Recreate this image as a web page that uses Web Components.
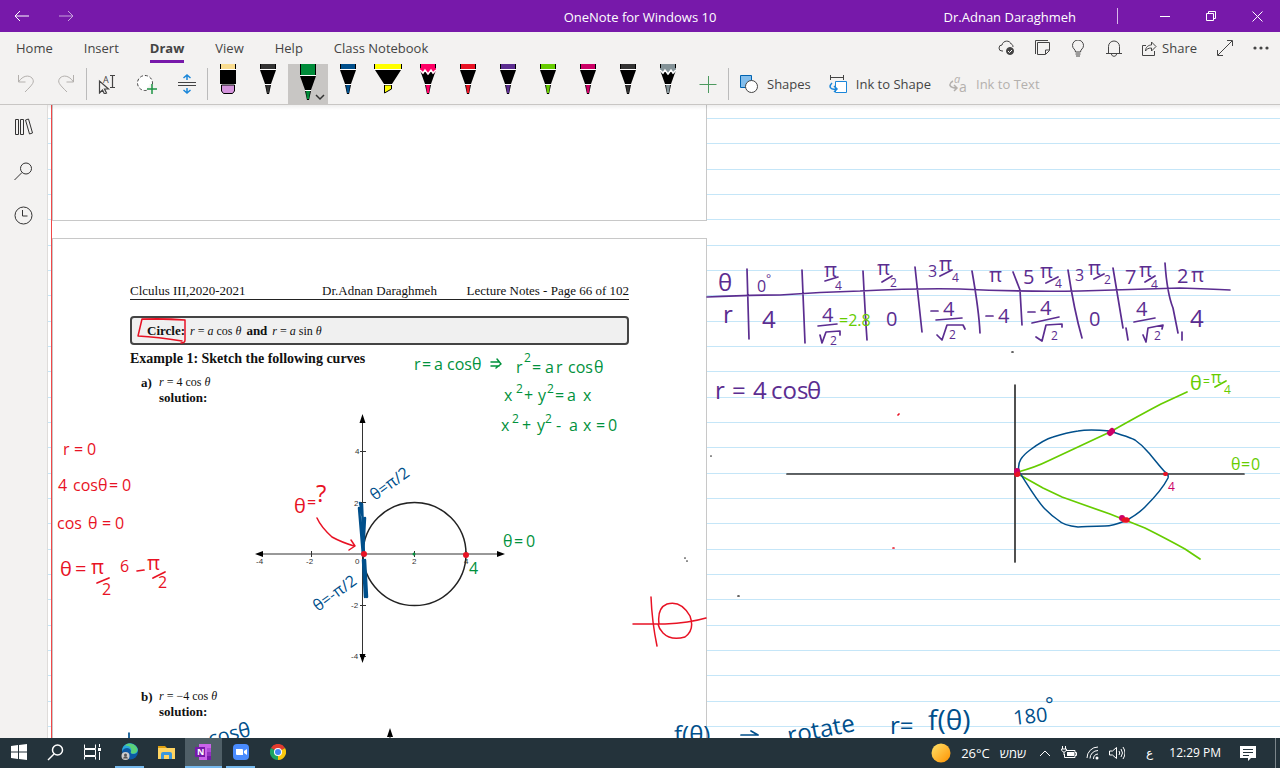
<!DOCTYPE html>
<html lang="en">
<head>
<meta charset="utf-8">
<title>OneNote for Windows 10</title>
<style>
html,body{margin:0;height:100%}
body{font:13px/18px "Open Sans","Noto Sans",sans-serif;color:#444;background:#fff;overflow:hidden}
</style>
</head>
<body>
<note-app></note-app>
<script>
function define(name, html, setup) {
  const t = document.createElement('template');
  t.innerHTML = html;
  customElements.define(name, class extends HTMLElement {
    constructor() {
      super();
      this.attachShadow({mode: 'open'}).append(t.content.cloneNode(true));
    }
    connectedCallback() { if (setup) setup(this, this.shadowRoot); }
  });
}
const base = `*,:host{box-sizing:border-box}button{font:inherit;color:inherit;background:none;border:0;padding:0;margin:0}
svg{display:block;fill:none;stroke:currentColor}`;

/* ---------- title bar ---------- */
define('title-bar', `<style>${base}
:host{display:grid;grid-template-columns:1fr auto 1fr;align-items:center;height:32px;background:#7719aa;color:#fff;flex:none}
nav,.right{display:flex;align-items:center}
nav button{width:44px;height:32px;display:grid;place-items:center}
nav button+button{opacity:.6}
.right{justify-content:flex-end}
.right button{width:46px;height:32px;display:grid;place-items:center}
i{width:1px;height:16px;background:#d9b8ea;margin:0 24px 0 41px}
span{padding-top:2px}
</style>
<nav><button aria-label="Back"><svg width="16" height="12"><path d="M15 6H1M6 1 1 6l5 5"/></svg></button>
<button aria-label="Forward"><svg width="16" height="12"><path d="M1 6h14M10 1l5 5-5 5"/></svg></button></nav>
<span>OneNote for Windows 10</span>
<div class="right"><span>Dr.Adnan Daraghmeh</span><i></i>
<button aria-label="Minimize"><svg width="10" height="10"><path d="M0 5.500h10"/></svg></button>
<button aria-label="Restore"><svg width="11" height="11"><path d="M.5 2.500h7v7h-7zM2.500 2V.5h7v7H8"/></svg></button>
<button aria-label="Close"><svg width="11" height="11"><path d="m.5.5 10 10m0-10-10 10"/></svg></button></div>`);

/* ---------- tabs ---------- */
define('tab-strip', `<style>${base}
:host{display:flex;justify-content:space-between;height:32px;flex:none;padding:0 1px 0 16px}
nav{display:flex;gap:31px}
nav button{height:31px;padding-top:4px;border-bottom:3px solid transparent}
nav .on{font-weight:bold;border-color:#7719aa}
.tools{display:flex;align-items:center}
.tools button{width:36px;height:32px;display:grid;place-items:center}
.tools .share{width:auto;display:flex;align-items:center;gap:5px;padding:0 10px}
</style>
<nav><button>Home</button><button>Insert</button><button class="on">Draw</button><button>View</button><button>Help</button><button>Class Notebook</button></nav>
<div class="tools">
<button aria-label="Sync"><svg width="17" height="16"><path d="M5 11H4a3 3 0 0 1 0-6c1-5 8-5 9-1 1 0 2 1 2 3"/><circle cx="12" cy="11" r="3.500" fill="#444"/><path stroke="#fff" d="m10 11 1.500 1.500L14 10"/></svg></button>
<button aria-label="Notes"><svg width="16" height="16"><path d="M1.500 14V.500H14M3.500 2.500h12v8l-4 4h-8zM11.500 14v-4h4"/></svg></button>
<button aria-label="Ideas"><svg width="14" height="17"><path d="M4.500 12c0-3-3-3-3-6.500a5.500 5.500 0 0 1 11 0C12.500 9 9.500 9 9.500 12zM4.500 14h5M5 16h4"/></svg></button>
<button aria-label="Notifications"><svg width="16" height="17"><path d="M2.500 13.500V6.500a5 5 0 0 1 11 0v7M0 13.500h16M5.500 14c0 3 5 3 5 0"/></svg></button>
<button class="share"><svg width="15" height="16"><path d="M4 5.500H.5v10h12V11M3.500 11c0-4 3-6 6-6V2l4.500 4.500L9.500 11V8c-3 0-5 1-6 3z"/></svg>Share</button>
<button aria-label="Full screen"><svg width="16" height="16"><path d="M1 15 15 1M10 .5h5.500V6M.5 10v5.500H6"/></svg></button>
<button aria-label="More"><svg width="16" height="4"><g fill="#444" stroke="none"><circle cx="2" cy="2" r="1.600"/><circle cx="8" cy="2" r="1.600"/><circle cx="14" cy="2" r="1.600"/></g></svg></button>
</div>`);

/* ---------- a pen of the ribbon: kind = pen | pencil | marker | eraser ---------- */
define('pen-button', `<style>${base}
:host{display:block;width:40px;height:40px}
:host([selected]){background:#c8c6c4}
button{display:block;width:40px;height:40px}
</style><button><svg width="40" height="40" stroke="none"></svg></button>`, (el, root) => {
  const c = el.getAttribute('color'), kind = el.getAttribute('kind') || 'pen', sel = el.hasAttribute('selected');
  root.querySelector('button').setAttribute('aria-label', el.getAttribute('label'));
  const d = sel ? 6 : 0;
  let s = '';
  if (kind === 'marker') s = `<path fill="#000" d="M6 0h28v5H6zM7 6h26l-9 14h-8z"/><path fill="${c}" d="M7 0h26v5H7z"/><path fill="${c}" stroke="#000" d="M16.500 21h7v4l-7 4z"/><path fill="#fff" d="M6 5h28v1H6zM15 20h10v1H15z"/>`;
  else if (kind === 'eraser') s = `<path fill="#000" d="M12 0h16v5H12zM12 6h16v14H12z"/><path fill="${c}" d="M13 0h14v5H13z"/><path fill="#fff" d="M12 5h16v1H12zM12 20h16v1H12z"/><path fill="#d494dc" stroke="#000" d="M13.500 21h13v6l-2 2.500h-9l-2-2.500z"/>`;
  else {
    s = `<path fill="#000" d="M12 0h16v${5+d}H12z"/><path fill="${c}" d="M13 0h14v${5+d}H13z"/>
    <g transform="translate(0 ${d})"><path fill="#000" d="M12 6h16l-5 14h-6z"/><path fill="#fff" d="M12 5h16v1H12zM17 20h6v1h-6z"/>
    <path fill="#000" d="M17 21h6l-2 9h-2z"/><path fill="${c}" d="M18 21h4l-1 8h-2z"/>`;
    if (kind === 'pencil') s += `<path fill="${c}" d="M12 4h16v3l-3 3-2-3-3 4-3-4-2 3-3-3z"/><path fill="none" stroke="#fff" stroke-width="1.500" d="m12 6 3 3 2-3 3 4 3-4 2 3 3-3"/>`;
    s += '</g>';
    if (sel) s += '<path fill="none" stroke="#333" stroke-width="1.500" d="m28 31 4 4 4-4"/>';
  }
  const svg = root.querySelector('svg');
  svg.style.stroke = 'none';
  svg.innerHTML = s;
});

/* ---------- ribbon ---------- */
define('draw-ribbon', `<style>${base}
:host{display:flex;height:41px;flex:none;border-bottom:1px solid #c8c6c4}
button{height:40px;width:40px;display:grid;place-items:center}
i{width:1px;height:32px;margin-top:4px;background:#bbb}
.edit{display:flex;width:208px;padding-left:6px}
.w{width:auto;display:flex;align-items:center;gap:9px;padding:0 7px 0 11px}
.off{color:#b3b0ad}
svg text{stroke:none;fill:currentColor}
</style>
<div class="edit">
<button class="off" aria-label="Undo"><svg width="18" height="20"><path d="M1.500 1v7h7M1.500 8C6 1 12 1 15 4c3 4 1 6-7 14"/></svg></button>
<button class="off" aria-label="Redo"><svg width="18" height="20"><path d="M16.500 1v7h-7M16.500 8C12 1 6 1 3 4c-3 4-1 6 7 14"/></svg></button>
<i></i>
<button aria-label="Select text"><svg width="20" height="20"><path stroke-width="1.200" d="M2.500 7v12l3-3 2 4 2-1-2-4h4zM13 1.500h5m-2.500 0v12M13 13.500h5"/><text x="6" y="9" font-size="9">A</text></svg></button>
<button aria-label="Lasso select"><svg width="20" height="20"><circle cx="8" cy="9" r="7.500" fill="#fff" stroke-dasharray="3 2"/><path stroke="#f3f2f1" stroke-width="5" d="M15 10v9M10.500 15h9"/><path stroke="#1e9444" stroke-width="1.500" d="M15 10v10M10 15h10"/></svg></button>
<button aria-label="Insert space"><svg width="18" height="20"><path d="M0 8.500h18M0 11.500h18"/><path stroke="#1a86d9" stroke-width="1.500" d="M9 6V1M5.500 4 9 1l3.500 3M9 14v5m-3.500-3L9 19l3.500-3"/></svg></button>
<i></i></div>
<pen-button kind="eraser" color="#f9dc8f" label="Eraser"></pen-button>
<pen-button color="#333" label="Black pen"></pen-button>
<pen-button color="#008c3a" label="Green pen" selected></pen-button>
<pen-button color="#004f8b" label="Blue pen"></pen-button>
<pen-button kind="marker" color="#ffff00" label="Yellow highlighter"></pen-button>
<pen-button kind="pencil" color="#ff0066" label="Pink pencil"></pen-button>
<pen-button color="#e81224" label="Red pen"></pen-button>
<pen-button color="#5b2d90" label="Purple pen"></pen-button>
<pen-button color="#66cc00" label="Lime pen"></pen-button>
<pen-button color="#cc0066" label="Magenta pen"></pen-button>
<pen-button color="#333" label="Charcoal pen"></pen-button>
<pen-button kind="pencil" color="#849398" label="Gray pencil"></pen-button>
<button aria-label="Add pen"><svg width="18" height="18"><path stroke="#4c9a5f" d="M.5 9.500h17M9.500 1v17"/></svg></button>
<i></i>
<button class="w"><svg width="18" height="18"><path fill="#83beec" stroke="#0063b1" d="M.5.500h11v12H.5z"/><circle cx="11.500" cy="11.500" r="6" fill="#fff"/></svg>Shapes</button>
<button class="w"><svg width="18" height="19"><path d="M1 2.500h14M1.500 0v5M14.500 0v5"/><path stroke="#1a86d9" fill="#fff" d="M6.500 6.500h11v11h-11z"/><path stroke="#1a86d9" stroke-width="1.500" d="M3 8c-4 4-1 7 4 6M5 11l3 3-3 3"/></svg>Ink to Shape</button>
<button class="w off" disabled><svg width="18" height="24"><text x="5" y="11" font-size="11" font-style="italic">a</text><text x="10" y="20" font-size="14">a</text><path stroke-width="1.500" d="M4 9c-5 3-4 7 4 7M5 13l3 3-3 3"/></svg>Ink to Text</button>`);

/* ---------- left rail ---------- */
define('side-rail', `<style>${base}
:host{display:flex;flex-direction:column;width:48px;flex:none;background:#f3f2f1;border-right:1px solid #dedcda;color:#333}
button{width:47px;height:44px;display:grid;place-items:center}
</style>
<button aria-label="Notebooks"><svg width="20" height="18"><path d="M1.500 1.500h3v15h-3zM6.500 1.500h3v15h-3zM11.500 2l3-1 4 14-3 1z"/></svg></button>
<button aria-label="Search"><svg width="19" height="19"><circle cx="12" cy="6.500" r="5.500"/><path d="M8 10.500.5 18"/></svg></button>
<button aria-label="Recent"><svg width="19" height="19"><circle cx="9.500" cy="9.500" r="8.500"/><path d="M8.500 4v6h5"/></svg></button>`);

/* ---------- printed plot of the lecture notes ---------- */
define('polar-plot', `<style>
:host{display:block;margin-top:6px}
svg{display:block;margin-left:124px}
text{font:8px "Liberation Sans",Arial,sans-serif;fill:#333}
</style>
<svg width="252" height="254" viewBox="254 411 252 254" fill="none" stroke="#333">
<path d="M260 554h240M362.500 420v236M311.500 551v6M414.500 551v6M466 551v6M360 451.500h6M360 502.500h6M360 605.500h6M360 656.500h6"/>
<path fill="#000" stroke="none" d="m255 554 8-3v6zM505 554l-8-3v6zM362.500 414l3 9h-6zM362.500 663l3-9h-6z"/>
<circle cx="414.500" cy="554" r="51.500" stroke-width="1.500" stroke="#222"/>
<text x="256" y="564" stroke="none">-4</text><text x="306" y="564" stroke="none">-2</text><text x="355" y="564" stroke="none">0</text><text x="412" y="564" stroke="none">2</text><text x="464" y="564" stroke="none">4</text>
<text x="355" y="454" stroke="none">4</text><text x="354" y="506" stroke="none">2</text><text x="351" y="608" stroke="none">-2</text><text x="351" y="659" stroke="none">-4</text>
</svg>`);

/* ---------- printout pages ---------- */
define('print-page', `<style>
:host{display:block;box-sizing:border-box;width:655px;background:#fff;border:1px solid #c8c8c8;padding:44px 77px 0}
</style><slot></slot>`);

define('lecture-sheet', `<style>
:host{display:block;font:13px/16px "Liberation Serif",serif;color:#111}
header{display:grid;grid-template-columns:1fr auto 1fr;border-bottom:1px solid #222}
header span:last-child{text-align:right}
.box{box-sizing:border-box;margin:16px 0 6px;height:29px;padding:0 15px;display:flex;align-items:center;gap:5px;border:2px solid #444;border-radius:4px;background:#f0f0f0}
.box span,li span{font-size:12px}
h2{font-size:14px;line-height:16px;margin:0}
ol{list-style:none;margin:8px 0 0;padding:0 0 0 11px}
li{display:grid;grid-template-columns:18px 1fr;line-height:15px}
li b:last-child{grid-column:2}
.next{margin-top:24px}
.b{margin-top:9px;display:block;margin-left:256px}
</style>
<header><span>Clculus III,2020-2021</span><span>Dr.Adnan Daraghmeh</span><span>Lecture Notes - Page 66 of 102</span></header>
<div class="box"><b>Circle:</b><span><i>r</i> = <i>a</i> cos <i>θ</i></span><b>and</b><span><i>r</i> = <i>a</i> sin <i>θ</i></span></div>
<h2>Example 1: Sketch the following curves</h2>
<ol><li><b>a)</b><span><i>r</i> = 4 cos <i>θ</i></span><b>solution:</b></li></ol>
<polar-plot></polar-plot>
<ol class="next"><li><b>b)</b><span><i>r</i> = −4 cos <i>θ</i></span><b>solution:</b></li></ol>
<svg class="b" width="8" height="14"><path d="m4 0 3 9H1z"/><path stroke="#222" d="M4 8v6"/></svg>`);

/* ---------- ink ---------- */
define('ink-layer', `<style>
:host{display:block;position:absolute;inset:0;pointer-events:none;overflow:hidden}
svg{display:block;width:100%;height:100%}
g{fill:none;stroke-linecap:round;stroke-linejoin:round;stroke-width:1.700}
.purple{color:#5b2d90}.green{color:#00913c}.red{color:#e81224}.blue{color:#004f8b}.lime{color:#66cc00}.pink{color:#cc0066}.dark{color:#333}
g g{stroke:currentColor}
text{font-family:"Open Sans","Noto Sans",sans-serif;fill:currentColor;stroke:none}
.s{font-size:12px}.m{font-size:16px}.l{font-size:20px}.x{font-size:24px}.xx{font-size:28px}
</style>
<svg><g transform="translate(-48 -105)">
<g class="purple">
<path d="M707 297q40-2 73-2 40-3 80-4 60-3 100-2 60 3 120 2 60-2 100-3 30 1 50 2M747 269l2 70M802 270l3 73M863 271q2 40 4 69M915 267l7 65M972 271q7 40 8 62M1013 272l7 18 2 35M1068 270q6 40 14 68M1113 268l10 60M1126 328l2 12M1165 263q2 30 8 45l5 25M1182 332v8"/>
<path d="M825 281l13-4M882 282l10-6M940 276l12-6M1046 283l12-6M1094 279l10-5M1145 282l10-6M818 326l19-2M820 335l2 8 4-11 14-1v4M931 311h7M936 320l26-2M937 335l5 5 5-15 16 0 2 4M986 316h7M1028 312h7M1032 323l27-6M1036 337l6 4 4-16 16-1v3M1134 322l21-4M1143 335l3 7 2-14 15-3-1 4"/>
<text class="x" x="718" y="291">θ</text><text class="x" x="723" y="323">r</text>
<text class="m" x="757" y="292">0</text><text class="s" x="766" y="283">°</text><text class="x" x="762" y="328">4</text>
<text class="l" x="824" y="277">π</text><text class="s" x="835" y="290">4</text>
<text class="l" x="877" y="275">π</text><text class="s" x="890" y="287">2</text>
<text class="m" x="928" y="277">3</text><text class="l" x="939" y="271">π</text><text class="s" x="952" y="282">4</text>
<text class="l" x="989" y="282">π</text>
<text class="l" x="1023" y="284">5</text><text class="l" x="1040" y="278">π</text><text class="s" x="1055" y="288">4</text>
<text class="m" x="1075" y="281">3</text><text class="l" x="1088" y="275">π</text><text class="s" x="1104" y="284">2</text>
<text class="l" x="1125" y="284">7</text><text class="l" x="1139" y="277">π</text><text class="s" x="1151" y="289">4</text>
<text class="l" x="1177" y="283">2</text><text class="l" x="1191" y="282">π</text>
<text class="l" x="822" y="322">4</text><text class="s" x="830" y="345">2</text>
<text class="l" x="886" y="326">0</text>
<text class="l" x="943" y="316">4</text><text class="s" x="949" y="339">2</text>
<text class="l" x="998" y="323">4</text>
<text class="l" x="1040" y="315">4</text><text class="s" x="1051" y="340">2</text>
<text class="l" x="1089" y="326">0</text>
<text class="l" x="1136" y="316">4</text><text class="s" x="1154" y="340">2</text>
<text class="x" x="1190" y="327">4</text>
<text class="x" y="399"><tspan x="715">r</tspan><tspan x="732">=</tspan><tspan x="753">4</tspan><tspan x="771">cos</tspan><tspan x="807">θ</tspan></text>
</g>
<g class="lime">
<text class="m" x="839" y="326">=2.8</text>
<path d="M1018 472q18-5 30-11l62-29q30-17 51-28l26-12M1018 474l25 14 19 9q25 9 48 17l35 14q22 11 40 21l15 10M1215 387l11-6"/>
<text class="l" x="1190" y="390">θ</text><text class="s" x="1203" y="386">=</text><text class="m" x="1211" y="383">π</text><text class="s" x="1224" y="394">4</text>
<text class="m" y="470"><tspan x="1231">θ</tspan><tspan x="1241">=</tspan><tspan x="1251">0</tspan></text>
</g>
<g class="dark"><path d="M787 474h457M1015 385v177"/><path d="M1012 352h1M711 456h0M685 558h0M687 561h0M738 596h1"/></g>
<g class="blue">
<path stroke-width="1.500" d="M1019 471C1017 462 1022 456 1030 450C1038 444 1046 439 1053 437C1062 434 1070 432 1078 431C1088 429 1100 430 1110 431C1120 435 1128 436 1135 440C1142 445 1144 447 1148 452C1155 460 1160 467 1165 472Q1169 474 1168 478C1163 488 1155 497 1145 507C1138 514 1131 518 1125 521C1115 525 1110 526 1105 526C1092 526 1085 527 1078 527C1068 526 1062 524 1058 520C1052 516 1048 512 1045 509C1038 502 1030 489 1020 473"/>
<path d="M359 508l4 48M362 504l2 52M360 503q6 24 3 48M365 518l-2 36M363 560l2 37M365 560l2 37" stroke-width="2.500"/>
<text class="m" transform="translate(375 501) rotate(-36)">θ=π/2</text>
<text class="m" transform="translate(318 612) rotate(-36)">θ=-π/2</text>
<path d="M129 733v6M647 739h5M741 735h16M745 740h12M751 731l7 4"/>
<text class="l" transform="translate(210 746) rotate(-14)">cosθ</text>
<text class="x" x="674" y="743">f(θ)</text>
<text class="x" transform="translate(789 744) rotate(-11)">rotate</text>
<text class="x" x="890" y="734">r=</text><text class="xx" x="928" y="730">f(θ)</text>
<text class="l" transform="translate(1014 725) rotate(-6)">180</text><text class="l" x="1045" y="712">°</text>
</g>
<g class="green">
<text class="m" y="370"><tspan x="414">r</tspan><tspan x="422">=</tspan><tspan x="434">a</tspan><tspan x="447">cos</tspan><tspan x="472">θ</tspan></text>
<path d="M491 362h8M491 366h8M497 359l4 5-5 4" stroke-width="1.500"/>
<text class="m" y="373"><tspan x="516">r</tspan><tspan x="532">=</tspan><tspan x="545">a</tspan><tspan x="556">r</tspan><tspan x="568">cos</tspan><tspan x="594">θ</tspan></text>
<text class="s" x="524" y="362">2</text>
<text class="m" y="401"><tspan x="504">x</tspan><tspan x="524">+</tspan><tspan x="538">y</tspan><tspan x="555">=</tspan><tspan x="567">a</tspan><tspan x="583">x</tspan></text>
<text class="s" y="393"><tspan x="516">2</tspan><tspan x="547">2</tspan></text>
<text class="m" y="431"><tspan x="501">x</tspan><tspan x="522">+</tspan><tspan x="537">y</tspan><tspan x="556">-</tspan><tspan x="569">a</tspan><tspan x="583">x</tspan><tspan x="596">=</tspan><tspan x="608">0</tspan></text>
<text class="s" y="423"><tspan x="512">2</tspan><tspan x="545">2</tspan></text>
<text class="m" y="547"><tspan x="503">θ</tspan><tspan x="514">=</tspan><tspan x="526">0</tspan></text>
<text class="m" x="469" y="574">4</text><path d="M414 554h0" stroke-width="3"/>
</g>
<g class="red">
<path stroke-width="1.500" d="M142 319q20 0 43 1v20q0 3-4 3M185 320q-20-2-43-1l-4 17q20 1 44 5"/>
<text class="m" y="455"><tspan x="63">r</tspan><tspan x="74">=</tspan><tspan x="87">0</tspan></text>
<text class="m" y="491"><tspan x="58">4</tspan><tspan x="73">cos</tspan><tspan x="98">θ</tspan><tspan x="109">=</tspan><tspan x="122">0</tspan></text>
<text class="m" y="529"><tspan x="57">cos</tspan><tspan x="88">θ</tspan><tspan x="102">=</tspan><tspan x="115">0</tspan></text>
<text class="l" y="576"><tspan x="60">θ</tspan><tspan x="75">=</tspan></text>
<text class="l" x="91" y="574">π</text><text class="m" x="102" y="595">2</text><text class="l" x="147" y="570">π</text><text class="m" x="158" y="588">2</text>
<text class="m" x="120" y="572">6</text>
<path d="M97 583l12-5M137 571l7-1M153 578l12-6"/>
<text class="l" y="513"><tspan x="294">θ</tspan></text><text class="m" x="307" y="508">=</text><text class="x" x="316" y="502">?</text>
<path stroke-width="1.500" d="M317 518q4 9 15 19 9 5 22 9M351 540l4 6-6 4M633 624h32q24-1 41-6M651 597q1 25 6 49M659 624q-2-16 8-20 14-4 23 12 5 14-5 21-14 4-22-4-4-4-5-9"/>
<path d="M364 554h0M466 555h0M1017 474h0" stroke-width="6"/><path d="M1125 520h2" stroke-width="5"/><path d="M1165 474h1" stroke-width="4"/><path d="M898 415l1-1M893 548h1"/>
</g>
<g class="pink"><path d="M1110 433l2-2M1122 518h0M1017 471h0" stroke-width="6"/><text class="s" x="1168" y="491">4</text></g>
<g class="red"><path d="M1018 474h0M1124 520h3" stroke-width="5"/></g>
</g></svg>`);

/* ---------- canvas ---------- */
define('note-canvas', `<style>
:host{display:block;position:relative;flex:1;min-width:0;overflow:hidden;background:#fff linear-gradient(#0000 13px,#c5e6f8 13px 14px,#0000 14px 38px,#c5e6f8 38px 39px,#0000 39px 64px,#c5e6f8 64px 65px,#0000 65px) 0 0/100% 76px}
.sheets{display:flex;flex-direction:column;padding-left:4px}
.sheets::before{content:"";position:absolute;left:3px;top:0;bottom:0;width:1px;background:#f04848}
.first{height:116px;border-top:0}
.gap{width:655px;height:17px;background:#fff}
.shade{position:absolute;inset:0 0 auto;height:5px;background:linear-gradient(#0001,#0000)}
</style>
<div class="sheets"><print-page class="first"></print-page><div class="gap"></div><print-page><lecture-sheet></lecture-sheet></print-page></div>
<ink-layer></ink-layer><div class="shade"></div>`);

/* ---------- taskbar ---------- */
define('task-button', `<style>${base}
:host{display:block;width:37px;height:30px;padding:0 4px}
button{width:100%;height:30px;display:grid;place-items:center;border-bottom:2px solid transparent}
:host([running]) button{border-color:#76b9ed}
:host([active]){background:#4f5f67;padding:0}
</style><button><slot></slot></button>`, (el, root) => root.querySelector('button').setAttribute('aria-label', el.getAttribute('label')));

define('task-bar', `<style>${base}
:host{display:flex;justify-content:space-between;height:30px;flex:none;background:#24333b;color:#fff;font-size:12px}
nav,.tray{display:flex;align-items:center}
.tray{padding-right:4px}
.tray button{height:30px;display:grid;place-items:center}
.tray .w{display:flex;align-items:center;gap:10px;margin-right:7px;font-size:13px}
.i{width:24px}.k{width:40px}.n{width:54px}
i{width:1px;height:30px;background:#7c868b}
svg text{stroke:none}
</style>
<nav>
<task-button label="Start"><svg width="16" height="16" style="fill:#fff;stroke:none"><path d="M0 2l7-1v6.500H0zM8 1l8-1v7.500H8zM0 8.500h7V15l-7-1zM8 8.500h8V16l-8-1z"/></svg></task-button>
<task-button label="Search"><svg width="17" height="17" stroke-width="1.500"><circle cx="10.500" cy="6" r="5"/><path d="M7 10 1 16"/></svg></task-button>
<task-button label="Task view"><svg width="17" height="16"><path d="M.5 4.500V.5M11.500 .5v4H.5M.5 5.500h11v6H.5zM.5 15.500v-3h11v3M15.500 0v3M15.500 8v8"/><path d="M14 4h3v3h-3z" fill="#fff" stroke="none"/></svg></task-button>
<task-button label="Edge" running><svg width="18" height="18" style="stroke:none"><circle cx="9" cy="8.500" r="8" fill="#0c59a4"/><path fill="#2aa8dc" d="M1 8.500A8 8 0 0 1 14 2c4 3 4 8-1 9-3 0-4-1-3-3C9 4 3 4 1 8.500z"/><path fill="#5bd27a" d="M8 .5c6 0 10 5 8 8-2 3-7 3-6 0 1-3-1-6-6-6 1-1 2-2 4-2z"/><circle cx="4.500" cy="13" r="4" fill="#ccc"/><circle cx="4.500" cy="12" r="1.500" fill="#555"/><path fill="#555" d="M2 15.500c1-3 4-3 5 0z"/></svg></task-button>
<task-button label="File Explorer"><svg width="17" height="15" style="stroke:none"><path fill="#e0a010" d="M0 1h7l2 2H0z"/><path fill="#ffd562" d="M0 3h17v11H0z"/><path fill="#3b97dd" d="M3 14V9q0-2 2-2h7q2 0 2 2v5h-3v-4H6v4z"/></svg></task-button>
<task-button label="OneNote" active running><svg width="18" height="18" style="stroke:none"><path fill="#ca64ea" d="M4 1h12v4H4z"/><path fill="#ca64ea" d="M4 5h10v12H4z"/><path fill="#ae4bd5" d="M12 5h4v4h-4z"/><path fill="#9332bf" d="M12 9h4v4h-4z"/><path fill="#7719aa" d="M12 13h4v4h-4zM0 4h10v10H0z"/><text x="2" y="12" font-size="9" font-weight="bold" fill="#fff">N</text></svg></task-button>
<task-button label="Zoom" running><svg width="16" height="16" style="stroke:none"><rect width="16" height="16" rx="4" fill="#4a8cff"/><path fill="#fff" d="M3 5h6q1 0 1 1v5H4q-1 0-1-1zM11 7l3-2v6l-3-2z"/></svg></task-button>
<task-button label="Chrome"><svg width="16" height="16" style="stroke:none"><path fill="#e33b2e" d="M8 8 1 4a8 8 0 0 1 14 0z"/><path fill="#f9c80e" d="M8 8l7-4a8 8 0 0 1-7 12z"/><path fill="#1da462" d="M8 16A8 8 0 0 1 1 4l7 4z"/><circle cx="8" cy="8" r="4" fill="#fff"/><circle cx="8" cy="8" r="3" fill="#4285f4"/></svg></task-button>
</nav>
<div class="tray">
<button class="w"><svg width="20" height="20" style="stroke:none"><defs><linearGradient id="s" x2="1" y2="1"><stop stop-color="#ffe36b"/><stop offset="1" stop-color="#ff9100"/></linearGradient></defs><circle cx="10" cy="10" r="9.500" fill="url(#s)"/></svg><span>26°C</span><span lang="he">שמש</span></button>
<button class="i" aria-label="Hidden icons"><svg width="12" height="8"><path d="m1 7 5-5 5 5"/></svg></button>
<button class="i" aria-label="Battery"><svg width="16" height="14"><path d="M5 4.500h9v7H3.500V8M14 6.500h1.500v3H14M1.500 0v3M4.500 0v3M.5 3h5c0 4-5 4-5 0M3 6v3"/><path fill="#fff" stroke="none" d="M6 6h7v4H6z"/></svg></button>
<button class="i" aria-label="Network"><svg width="14" height="14"><path d="M1 12A11 11 0 0 1 12 1M4 12.500a8 8 0 0 1 8-8M7.500 13A5 5 0 0 1 12 8"/><circle cx="11" cy="12" r="1.500" fill="#fff" stroke="none"/></svg></button>
<button class="i" aria-label="Volume"><svg width="16" height="14"><path d="M.5 5h3l4-3.500v11L3.500 9h-3zM10 5q1.500 2 0 4M12 3q3 4 0 8M14 1q4 6 0 12"/></svg></button>
<button class="k" lang="ar">ع</button>
<button>12:29 PM</button>
<button class="n" aria-label="Notifications"><svg width="16" height="16"><path fill="#fff" stroke="none" d="M0 1h16v12h-5l-3 3v-3H0z"/><path stroke="#24333b" d="M3 4.500h10M3 7.500h10M3 10.500h6"/></svg></button>
<i></i></div>`);

/* ---------- application ---------- */
define('note-app', `<style>${base}
:host{display:flex;flex-direction:column;height:100vh;background:#f3f2f1}
main{display:flex;flex:1;min-height:0}
</style>
<title-bar></title-bar><tab-strip></tab-strip><draw-ribbon></draw-ribbon>
<main><side-rail></side-rail><note-canvas></note-canvas></main>
<task-bar></task-bar>`);
</script>
</body>
</html>
